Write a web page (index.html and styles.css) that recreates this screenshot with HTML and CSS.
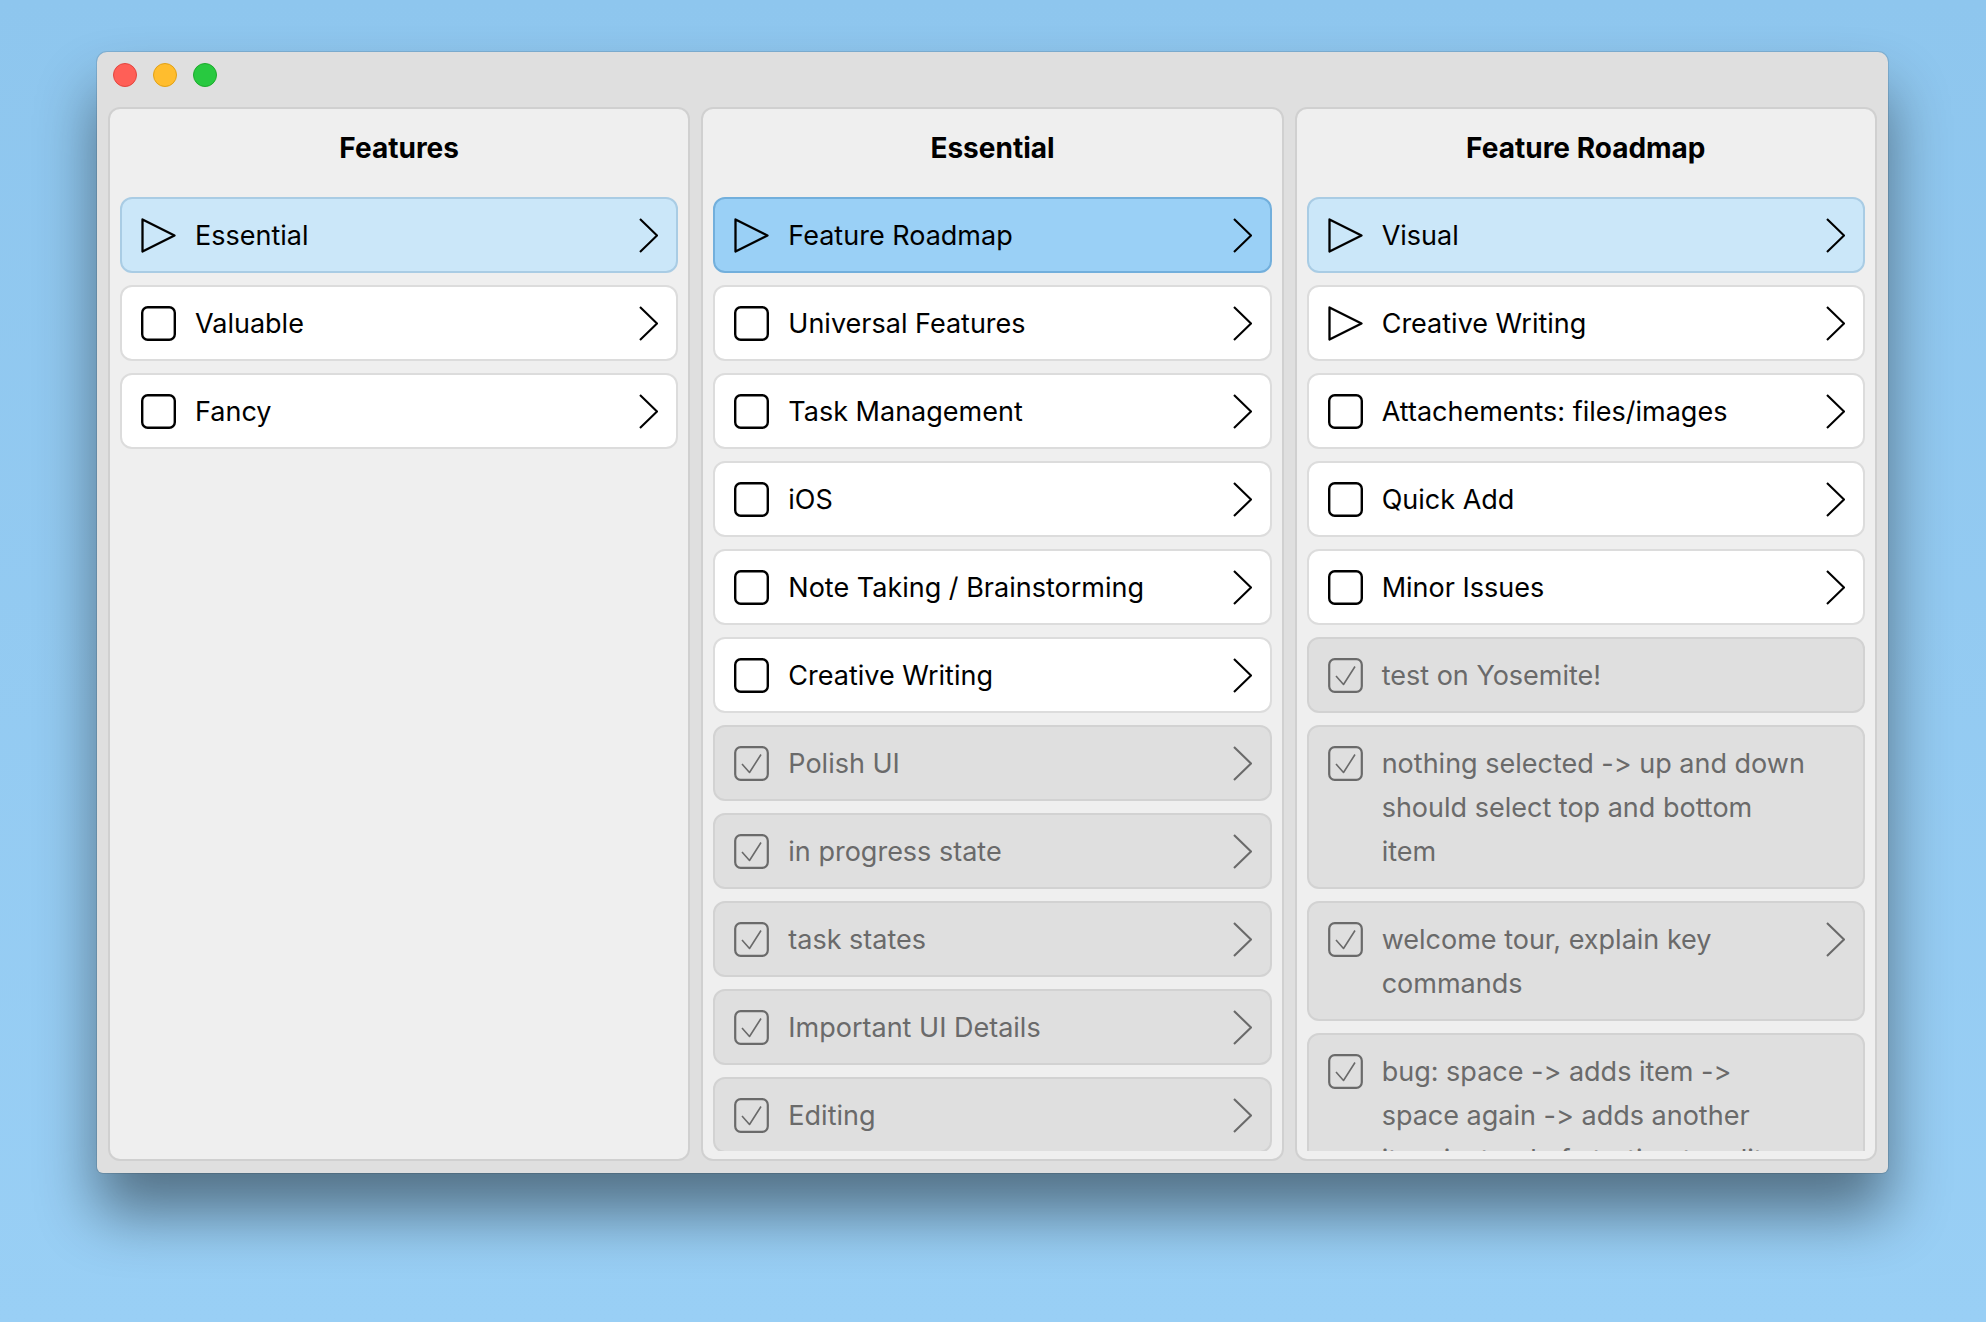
FILE: index.html
```html
<!DOCTYPE html>
<html lang="en">
<head>
<meta charset="utf-8">
<title>Features</title>
<link rel="stylesheet" href="styles.css">
</head>
<body>
<svg class="defs" width="0" height="0" aria-hidden="true">
  <symbol id="tri" viewBox="0 0 35 35"><path d="M1.5 1.5 L33.5 17.5 L1.5 33.5 Z" fill="none" stroke="currentColor" stroke-width="2.3" stroke-linejoin="round"/></symbol>
  <symbol id="box" viewBox="0 0 35 35"><rect x="1.2" y="1.2" width="32.6" height="32.6" rx="5.5" fill="none" stroke="currentColor" stroke-width="2.4"/></symbol>
  <symbol id="checked" viewBox="0 0 35 35"><rect x="1.2" y="1.2" width="32.6" height="32.6" rx="5.5" fill="none" stroke="currentColor" stroke-width="2.2"/><path d="M8 18 L15.5 26.5 L27 8.5" fill="none" stroke="currentColor" stroke-width="1.6" stroke-linejoin="round"/></symbol>
  <symbol id="chev" viewBox="0 0 19 35"><path d="M1 1 L18 17.5 L1 34" fill="none" stroke="currentColor" stroke-width="2.1"/></symbol>
</svg>
<div class="desktop">
  <div class="window">
    <div class="titlebar">
      <span class="light light--close"></span>
      <span class="light light--min"></span>
      <span class="light light--max"></span>
    </div>
    <div class="columns">
      <section class="panel">
        <h2 class="panel-title">Features</h2>
        <div class="list">
          <div class="row row--selected">
            <svg class="ic"><use href="#tri"/></svg><span class="label">Essential</span><svg class="chev"><use href="#chev"/></svg>
          </div>
          <div class="row">
            <svg class="ic"><use href="#box"/></svg><span class="label">Valuable</span><svg class="chev"><use href="#chev"/></svg>
          </div>
          <div class="row">
            <svg class="ic"><use href="#box"/></svg><span class="label">Fancy</span><svg class="chev"><use href="#chev"/></svg>
          </div>
        </div>
      </section>

      <section class="panel">
        <h2 class="panel-title">Essential</h2>
        <div class="list">
          <div class="row row--active">
            <svg class="ic"><use href="#tri"/></svg><span class="label">Feature Roadmap</span><svg class="chev"><use href="#chev"/></svg>
          </div>
          <div class="row">
            <svg class="ic"><use href="#box"/></svg><span class="label">Universal Features</span><svg class="chev"><use href="#chev"/></svg>
          </div>
          <div class="row">
            <svg class="ic"><use href="#box"/></svg><span class="label">Task Management</span><svg class="chev"><use href="#chev"/></svg>
          </div>
          <div class="row">
            <svg class="ic"><use href="#box"/></svg><span class="label">iOS</span><svg class="chev"><use href="#chev"/></svg>
          </div>
          <div class="row">
            <svg class="ic"><use href="#box"/></svg><span class="label">Note Taking / Brainstorming</span><svg class="chev"><use href="#chev"/></svg>
          </div>
          <div class="row">
            <svg class="ic"><use href="#box"/></svg><span class="label">Creative Writing</span><svg class="chev"><use href="#chev"/></svg>
          </div>
          <div class="row row--done">
            <svg class="ic"><use href="#checked"/></svg><span class="label">Polish UI</span><svg class="chev"><use href="#chev"/></svg>
          </div>
          <div class="row row--done">
            <svg class="ic"><use href="#checked"/></svg><span class="label">in progress state</span><svg class="chev"><use href="#chev"/></svg>
          </div>
          <div class="row row--done">
            <svg class="ic"><use href="#checked"/></svg><span class="label">task states</span><svg class="chev"><use href="#chev"/></svg>
          </div>
          <div class="row row--done">
            <svg class="ic"><use href="#checked"/></svg><span class="label">Important UI Details</span><svg class="chev"><use href="#chev"/></svg>
          </div>
          <div class="row row--done">
            <svg class="ic"><use href="#checked"/></svg><span class="label">Editing</span><svg class="chev"><use href="#chev"/></svg>
          </div>
        </div>
      </section>

      <section class="panel">
        <h2 class="panel-title">Feature Roadmap</h2>
        <div class="list">
          <div class="row row--selected">
            <svg class="ic"><use href="#tri"/></svg><span class="label">Visual</span><svg class="chev"><use href="#chev"/></svg>
          </div>
          <div class="row">
            <svg class="ic"><use href="#tri"/></svg><span class="label">Creative Writing</span><svg class="chev"><use href="#chev"/></svg>
          </div>
          <div class="row">
            <svg class="ic"><use href="#box"/></svg><span class="label">Attachements: files/images</span><svg class="chev"><use href="#chev"/></svg>
          </div>
          <div class="row">
            <svg class="ic"><use href="#box"/></svg><span class="label">Quick Add</span><svg class="chev"><use href="#chev"/></svg>
          </div>
          <div class="row">
            <svg class="ic"><use href="#box"/></svg><span class="label">Minor Issues</span><svg class="chev"><use href="#chev"/></svg>
          </div>
          <div class="row row--done">
            <svg class="ic"><use href="#checked"/></svg><span class="label">test on Yosemite!</span><svg class="chev chev--none"><use href="#chev"/></svg>
          </div>
          <div class="row row--done">
            <svg class="ic"><use href="#checked"/></svg><span class="label">nothing selected -&gt; up and down<br>should select top and bottom<br>item</span><svg class="chev chev--none"><use href="#chev"/></svg>
          </div>
          <div class="row row--done">
            <svg class="ic"><use href="#checked"/></svg><span class="label">welcome tour, explain key<br>commands</span><svg class="chev"><use href="#chev"/></svg>
          </div>
          <div class="row row--done">
            <svg class="ic"><use href="#checked"/></svg><span class="label">bug: space -&gt; adds item -&gt;<br>space again -&gt; adds another<br>item instead of starting to edit</span><svg class="chev chev--none"><use href="#chev"/></svg>
          </div>
        </div>
      </section>
    </div>
  </div>
</div>
</body>
</html>
```

FILE: styles.css
```css
* { box-sizing: border-box; }

html, body {
  margin: 0;
  padding: 0;
}

body {
  width: 1986px;
  height: 1322px;
  overflow: hidden;
  background: linear-gradient(#8ec6ee, #99cff5);
  font-family: Inter, "Liberation Sans", sans-serif;
  font-feature-settings: "calt" 0, "liga" 0;
  font-variant-ligatures: none;
  color: #000;
}

.defs { position: absolute; width: 0; height: 0; overflow: hidden; }

.desktop {
  padding: 52px 0 0 97px;
}

.window {
  width: 1791px;
  height: 1121px;
  background: #dfdfdf;
  border-radius: 10px 10px 6px 6px;
  box-shadow: 0 40px 60px rgba(0, 0, 0, 0.45), 0 0 0 1px rgba(0, 0, 0, 0.10);
  display: flex;
  flex-direction: column;
}

.titlebar {
  height: 55px;
  flex-shrink: 0;
  display: flex;
  align-items: flex-start;
  gap: 16px;
  padding: 11px 0 0 16px;
}

.light {
  width: 24px;
  height: 24px;
  border-radius: 50%;
  border: 1px solid;
}
.light--close { background: #ff5f57; border-color: #e2463f; }
.light--min { background: #ffbd2e; border-color: #e1a116; }
.light--max { background: #28c940; border-color: #1daa2c; }

.columns {
  flex: 1;
  min-height: 0;
  display: grid;
  grid-template-columns: repeat(3, 1fr);
  gap: 11px;
  padding: 0 11px 12px;
}

.panel {
  min-height: 0;
  display: flex;
  flex-direction: column;
  background: #efefef;
  border: 2px solid #d0d0d0;
  border-radius: 12px;
  overflow: hidden;
}

.panel-title {
  margin: 0;
  padding: 17px 0 27px;
  line-height: 44px;
  font-size: 28px;
  font-weight: 700;
  text-align: center;
  flex-shrink: 0;
}

.list {
  flex: 1;
  min-height: 0;
  overflow: hidden;
  display: flex;
  flex-direction: column;
  gap: 12px;
  padding: 0 10px;
  margin-bottom: 8px;
}

.row {
  flex-shrink: 0;
  display: flex;
  align-items: flex-start;
  gap: 19px;
  padding: 15px 18px 13px 19px;
  background: #ffffff;
  border: 2px solid #dcdcdc;
  border-radius: 12px;
  font-size: 27px;
  line-height: 44px;
  color: #000;
}

.row--selected {
  background: #cbe7f9;
  border-color: #a9cce4;
}

.row--active {
  background: #9ad0f6;
  border-color: #72afdc;
}

.row--done {
  background: #dfdfdf;
  border-color: #d2d2d2;
  color: #6a6a6a;
}

.label {
  flex: 1;
  min-width: 0;
  white-space: nowrap;
}

.ic {
  width: 35px;
  height: 35px;
  margin-top: 3.5px;
  flex-shrink: 0;
  color: #000;
}

.row--done .ic { color: #6a6a6a; }

.chev {
  width: 19px;
  height: 35px;
  margin-top: 3.5px;
  flex-shrink: 0;
  color: #000;
}

.row--done .chev { color: #6a6a6a; }

.chev--none { visibility: hidden; }
```
